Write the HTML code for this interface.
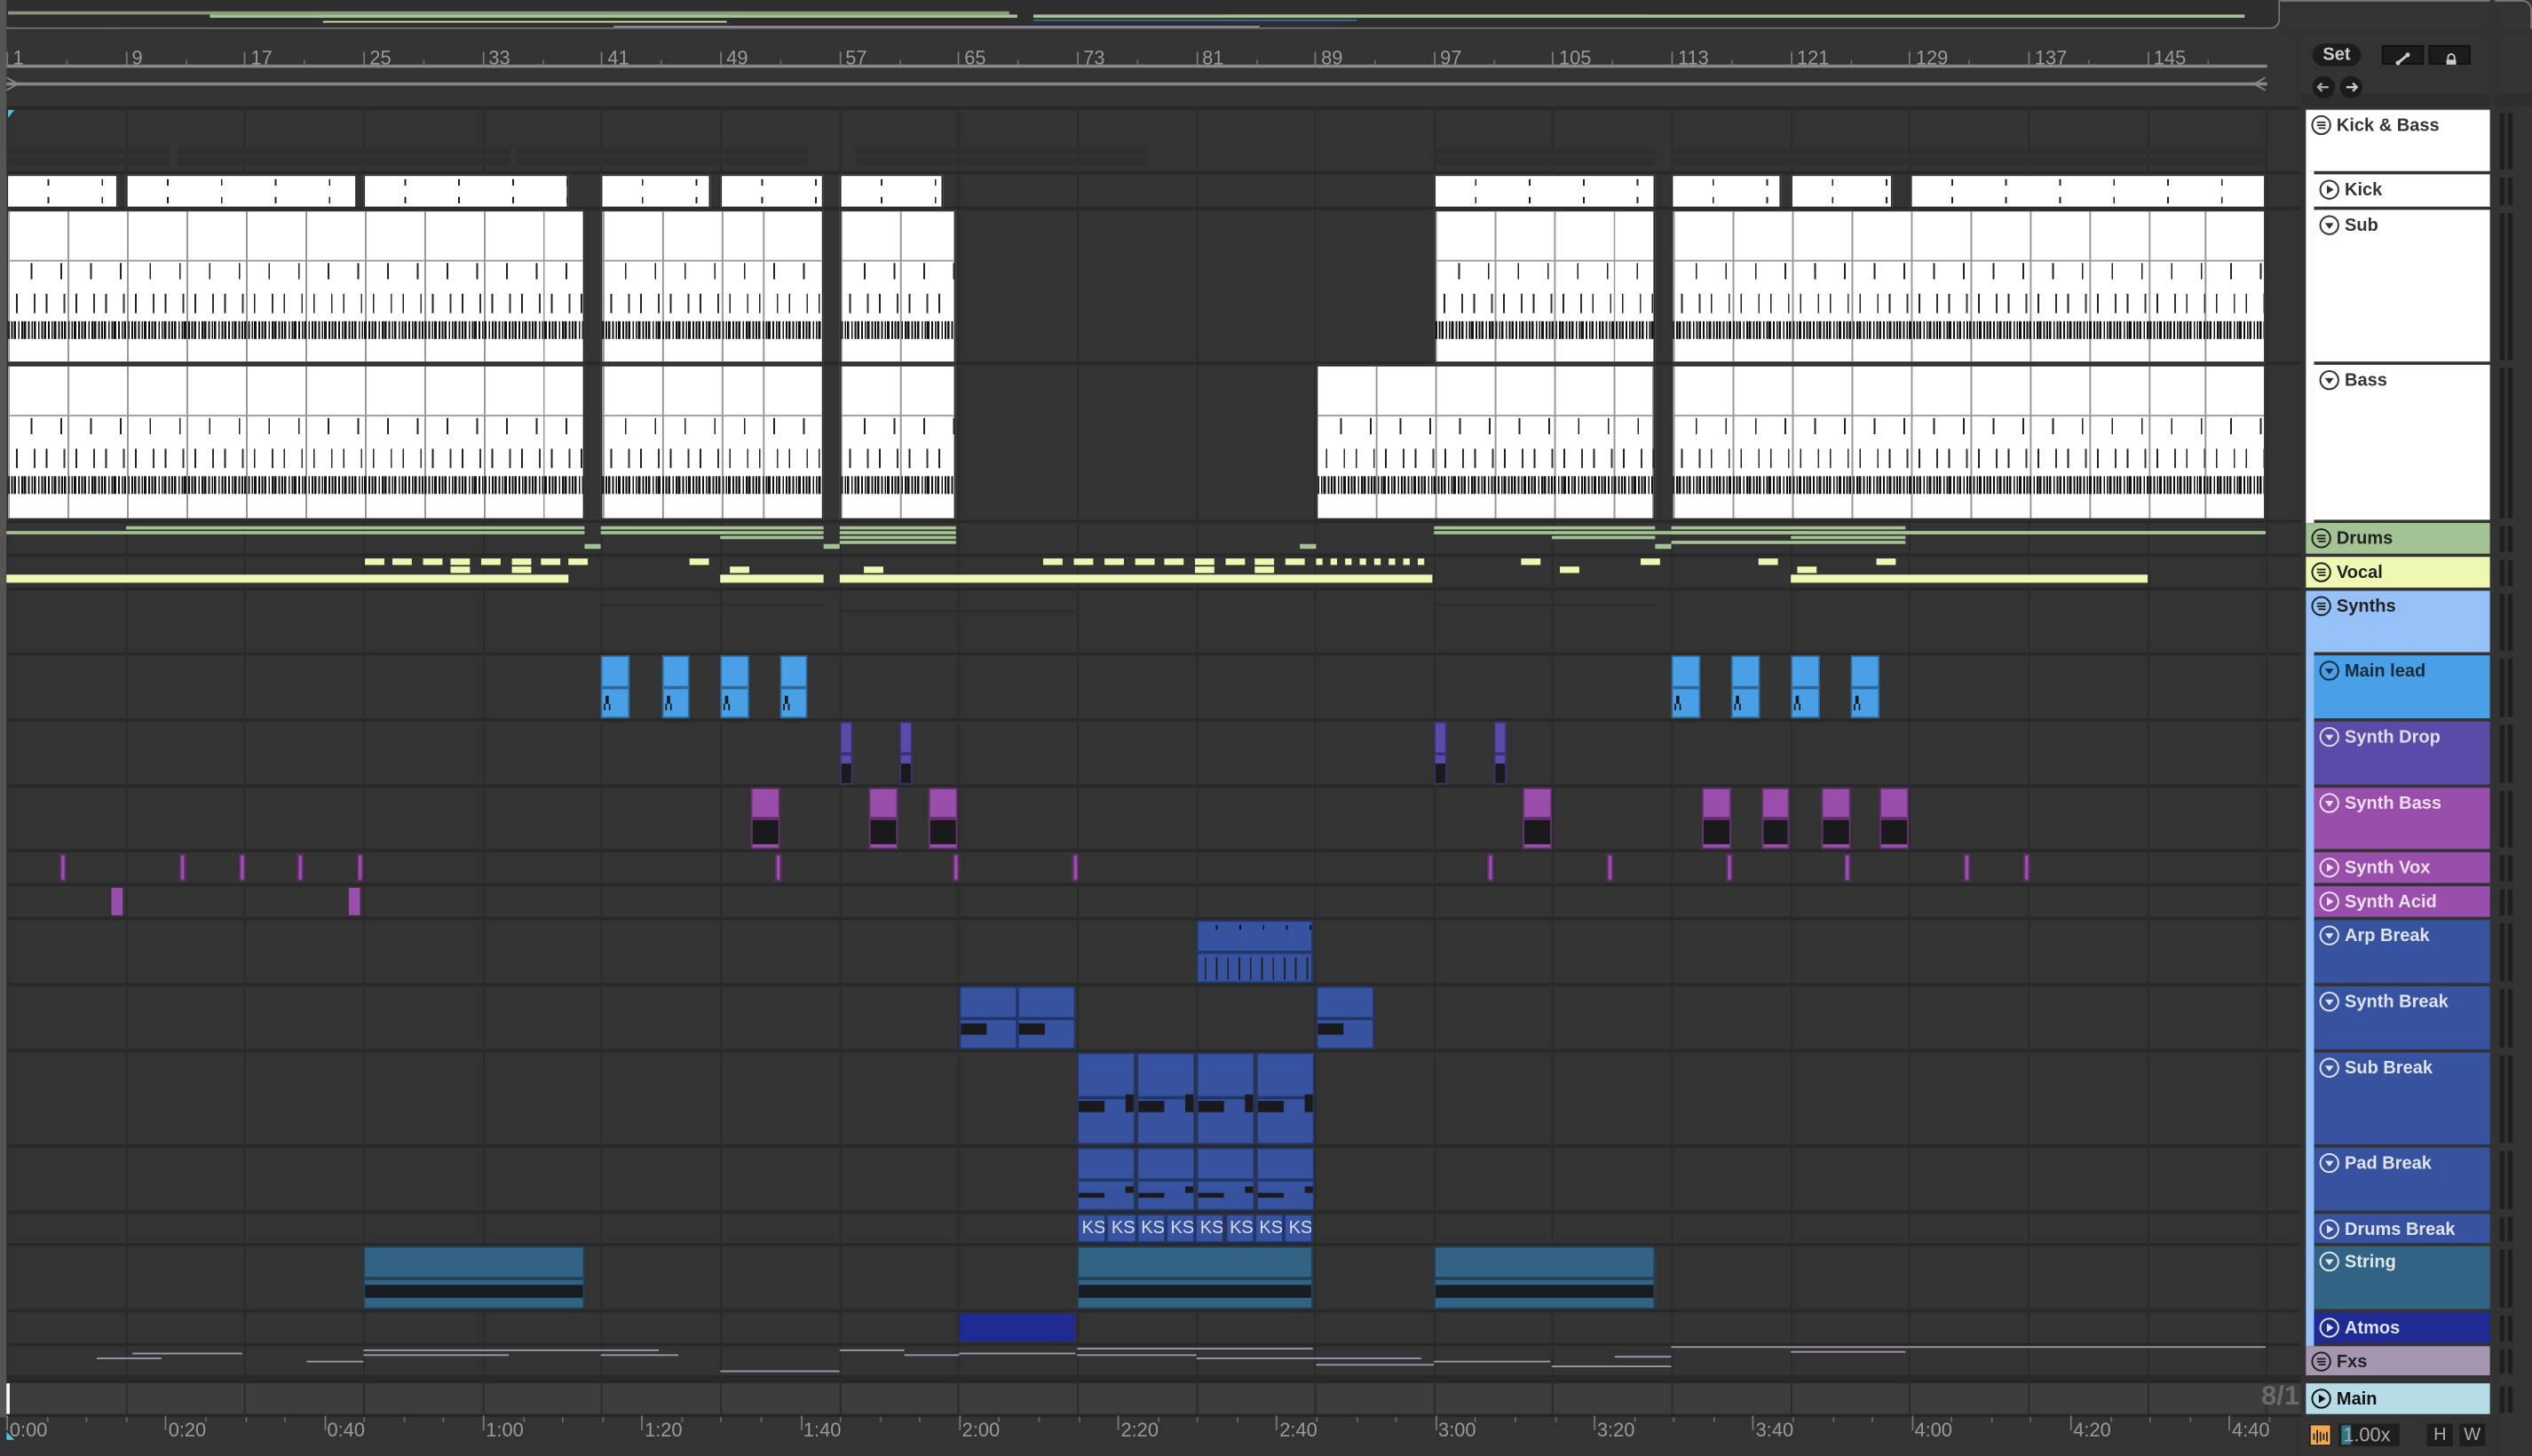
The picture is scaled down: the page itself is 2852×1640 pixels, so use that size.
<!DOCTYPE html>
<html><head><meta charset="utf-8">
<style>
html,body{margin:0;padding:0;background:#2b2b2b;width:2852px;height:1640px;overflow:hidden}
#s{position:absolute;left:0;top:0;width:1568px;height:902px;transform:scale(1.81888,1.81818);transform-origin:0 0;background:#333;font-family:"Liberation Sans",sans-serif;overflow:hidden}
.a{position:absolute;box-sizing:border-box}
</style></head><body>
<div id="s"></div>
<script>
const S=document.getElementById('s');
function d(x,y,w,h,st,html){const e=document.createElement('div');e.className='a';e.style.cssText=`left:${x}px;top:${y}px;width:${w}px;height:${h}px;`+(st||'');if(html)e.innerHTML=html;S.appendChild(e);return e;}
const X=b=>4+(b-1)/8*73.65;
d(0,0,1412,18,'background:#2e2e2e;border:1.5px solid #777;border-radius:0 0 6px 6px;border-top:none');
d(5,7,620,2,'background:#889a7a');d(130,9,500,2,'background:#a3c394');d(640,9,380,2,'background:#a3c394');d(760,9,130,2,'background:#a3c394');d(890,9,500,2,'background:#a3c394');
d(200,13,250,1,'background:#d7e3a0');d(640,12,200,1,'background:#3a6d8e');d(380,16,400,1,'background:#9a8fa8');
d(0,18,1425,48,'background:#333');
d(4,40,1400,1.5,'background:#888');d(4,51,1400,1.5,'background:#888');
d(4,43,8,8,'','<svg width="8" height="8"><path d="M0 0L7 4L0 8" fill="none" stroke="#888"/></svg>');
d(1395,43,8,8,'','<svg width="8" height="8"><path d="M8 0L1 4L8 8" fill="none" stroke="#888"/></svg>');
[1,9,17,25,33,41,49,57,65,73,81,89,97,105,113,121,129,137,145].forEach(b=>{const x=X(b);d(x,32,1,8,'background:#777');d(x+4,29,40,14,'font-size:12px;color:#9a9a9a',''+b);d(x+37,37,1,3,'background:#666');});
d(4,60,5,5,'','<svg width="5" height="5"><path d="M0 0L5 0L1 5Z" fill="#4cc6e0"/></svg>');
const rows=[[68,106],[108,128],[130,224],[226,322],[324,343],[345,364],[366,404],[406,445],[447,486],[488,526],[528,547],[549,568],[570,609],[611,650],[652,709],[711,750],[752,770],[772,811],[813,832],[834,852]];
d(0,66,1425,2,'background:#282828');
rows.forEach(r=>{d(0,r[1],1425,2,'background:#282828');});
d(0,854,1425,3,'background:#282828');
d(0,857,1425,19,'background:#3d3d3d');
d(0,876,1425,2,'background:#262626');
for(let b=1;b<=153;b+=8){const x=X(b);d(x,66,1,810,'background:#2a2a2a');}
d(0,0,4,902,'background:#555');
[[4,105],[110,315],[320,500],[530,710],[888,1025],[1035,1403]].forEach(s=>{d(s[0],92,s[1]-s[0],4,'background:#2e2e2e');d(s[0],98,s[1]-s[0],4,'background:#2e2e2e');});
function wclip(x1,x2,y1,y2,kind){
 const w=x2-x1;const e=d(x1,y1,w,y2-y1,'background:#fff;border:1px solid #2a2a2a;overflow:hidden');
 let h='';
 if(kind==0){h+=`<div class="a" style="left:0;top:2px;width:100%;height:4px;background:repeating-linear-gradient(90deg,transparent 0 ${(X(13)-X(9))/2+6}px,#222 0 ${(X(13)-X(9))/2+7}px,transparent 0 ${(X(13)-X(9))/2+15}px)"></div>`;
  h+=`<div class="a" style="left:0;bottom:2px;width:100%;height:4px;background:repeating-linear-gradient(90deg,transparent 0 ${(X(13)-X(9))/2+6}px,#222 0 ${(X(13)-X(9))/2+7}px,transparent 0 ${(X(13)-X(9))/2+15}px)"></div>`;}
 else{const sp=(X(5)-X(1));
  h+=`<div class="a" style="left:0;top:0;width:100%;height:100%;background:repeating-linear-gradient(90deg,#999 0 1px,transparent 1px ${sp}px);background-position:${-((x1-4)%sp)}px 0"></div>`;
  h+=`<div class="a" style="left:0;top:30px;width:100%;height:1px;background:#999"></div>`;
  h+=`<div class="a" style="left:0;top:32px;width:100%;height:10px;background:repeating-linear-gradient(90deg,transparent 0 14px,#222 14px 15px,transparent 15px 18.4px)"></div>`;
  h+=`<div class="a" style="left:0;top:51px;width:100%;height:12px;background:repeating-linear-gradient(90deg,transparent 0 5px,#222 5px 6px,transparent 6px 16px,#333 16px 17px,transparent 17px 18.4px)"></div>`;
  h+=`<div class="a" style="left:0;top:68px;width:100%;height:11px;background:repeating-linear-gradient(90deg,#111 0 1px,transparent 1px 2px,#111 2px 3px,transparent 3px 3.5px,#111 3.5px 5px,transparent 5px 6.2px)"></div>`;}
 e.innerHTML=h;}
[[4,73],[78,221],[225,352],[372,440],[446,510],[520,584],[888,1025],[1035,1103],[1109,1172],[1183,1403]].forEach(s=>wclip(s[0],s[1],108,129,0));
[[4,362],[372,510],[520,592],[888,1025],[1035,1403]].forEach(s=>wclip(s[0],s[1],130,225,1));
[[4,362],[372,510],[520,592],[815,1025],[1035,1403]].forEach(s=>wclip(s[0],s[1],226,322,1));
const G='#a3c394';
[[78,362,326],[4,362,329],[372,510,326],[372,510,329],[446,510,332],[520,592,326],[520,592,329],[520,592,332],[520,592,335],[888,1025,326],[888,1403,329],[961,1025,332],[1035,1180,326],[1035,1403,329],[1109,1180,332],[1035,1180,335]].forEach(s=>d(s[0],s[2],s[1]-s[0],2,'background:'+G));
[[362,372],[510,520],[805,815],[1025,1035]].forEach(s=>d(s[0],337,s[1]-s[0],3,'background:'+G));
const V='#eef8b2';
[226,243,262,279,298,317,335,352,427,646,665,684,703,721,740,759,777,796,942,1016,1089,1162].forEach((x,i)=>d(x,346,12,4,'background:'+V));
[279,317,452,535,740,777,966,1113].forEach(x=>d(x,351,12,4,'background:'+V));
for(let x=815;x<884;x+=9)d(x,346,4,4,'background:'+V);
[[4,352],[446,510],[520,887],[1109,1330]].forEach(s=>d(s[0],356,s[1]-s[0],5,'background:'+V));
[[372,510,370],[520,666,374],[888,1025,370]].forEach(s=>d(s[0],s[2]+4,s[1]-s[0],1,'background:#2a2a2a'));
function cc(x1,x2,y1,y2,col,notes){const e=d(x1,y1,x2-x1,y2-y1,'background:'+col+';border:1px solid rgba(0,0,0,.35);overflow:hidden');const hh=Math.round((y2-y1)*0.45);let h=`<div class="a" style="left:0;top:${hh}px;width:100%;height:1.5px;background:rgba(0,0,0,.35)"></div>`;(notes||[]).forEach(n=>h+=`<div class="a" style="left:${n[0]}px;top:${n[1]}px;width:${n[2]}px;height:${n[3]}px;background:#1a1a1c"></div>`);e.innerHTML=h;return e;}
[[372,390],[410,427],[446,464],[483,500],[1035,1053],[1072,1090],[1109,1127],[1146,1164]].forEach(s=>cc(s[0],s[1],406,445,'#4aa0e6',[[2,24,2,5],[1,29,1,4],[4,29,1,4],[3,37,2,3]]));
[[520,528],[557,565],[888,896],[925,933]].forEach(s=>cc(s[0],s[1],447,486,'#5b4aa8',[[0,25,8,15]]));
[[465,483],[538,556],[575,593],[943,961],[1054,1072],[1091,1108],[1128,1146],[1164,1182]].forEach(s=>cc(s[0],s[1],488,526,'#9a4eab',[[0,19,18,15]]));
[37,111,148,184,221,480,590,664,921,995,1069,1142,1216,1253].forEach(x=>d(x,529,4,17,'background:#9a4eab;border:1px solid #5a2a66'));
[69,216].forEach(x=>d(x,550,7,17,'background:#9a4eab'));
const B='#3753a0';
const arp=cc(741,813,570,609,B);arp.innerHTML+=`<div class="a" style="left:0;top:2px;width:100%;height:3px;background:repeating-linear-gradient(90deg,transparent 0 11px,#111 11px 12px,transparent 12px 14.5px)"></div><div class="a" style="left:0;top:22px;width:100%;height:14px;background:repeating-linear-gradient(90deg,transparent 0 4px,#222 4px 5px,transparent 5px 7px)"></div>`;
[[594,630],[630,666],[815,851]].forEach(s=>cc(s[0],s[1],611,650,B,[[0,22,16,7]]));
[667,704,741,778].forEach(x=>cc(x,x+36,652,709,B,[[0,29,16,7],[29,25,11,11],[42,50,10,12]]));
[667,704,741,778].forEach(x=>cc(x,x+36,711,750,B,[[0,27,16,3],[29,23,11,4],[42,34,10,4]]));
for(let i=0;i<8;i++){const x=667+i*18.3;d(x,752,18.3,18,'background:'+B+';border:1px solid #223366;color:#d6dcef;font-size:11px;line-height:16px;padding-left:2px;overflow:hidden','KSI');}
[[225,362],[667,813],[888,1025]].forEach(s=>{const e=cc(s[0],s[1],772,811,'#336384');e.innerHTML+=`<div class="a" style="left:0;top:23px;width:100%;height:8px;background:#191d21"></div>`;});
d(594,814,72,17,'background:#1f2a92');
const F='#a596b2';
[[60,100,841],[82,150,838],[190,225,843],[225,408,836],[225,315,839],[372,420,839],[446,520,849],[520,560,836],[560,594,839],[594,666,838],[667,813,835],[667,741,839],[741,880,841],[815,888,845],[888,960,843],[961,1035,846],[1000,1035,840],[1035,1403,834],[1109,1180,837]].forEach(s=>d(s[0],s[2],s[1]-s[0],1,'background:'+F));
d(1380,855,44,22,'font-size:17px;font-weight:bold;color:#6a6a6a;text-align:right','8/1');
d(4,857,2,19,'background:#fff');
d(0,878,1425,24,'background:#333');
['0:00','0:20','0:40','1:00','1:20','1:40','2:00','2:20','2:40','3:00','3:20','3:40','4:00','4:20','4:40'].forEach((t,i)=>{const x=4+i*98.3;d(x,877,1,9,'background:#777');d(x+2,879,40,14,'font-size:12px;color:#9a9a9a',t);for(let k=1;k<4;k++)d(x+k*24.6,878,1,3,'background:#666');});
d(4,879,5,5,'','<svg width="5" height="5"><path d="M0 0L0 5L5 5Z" fill="#4cc6e0"/></svg>');
d(1425,18,143,884,'background:#333');
d(1412,0,156,18,'background:#333;border-top:1.5px solid #777;border-right:1.5px solid #777;border-radius:0 6px 0 0');
d(1425,58,143,8,'background:#2e2e2e');
d(1432,27,30,14,'background:#1c1c1c;border-radius:7px;color:#ccc;font-size:11px;font-weight:bold;text-align:center;line-height:14px','Set');
d(1475,28,26,12,'background:#1c1c1c;border:1px solid #111','<svg width="26" height="11"><path d="M9 8L15 3" stroke="#ccc" stroke-width="1.6"/><circle cx="9" cy="8" r="1.4" fill="#ccc"/><circle cx="15" cy="3" r="1.4" fill="#ccc"/></svg>');
d(1504,28,26,12,'background:#1c1c1c;border:1px solid #111','<svg width="26" height="11"><path d="M10 6h6v3h-6z" fill="#ccc"/><path d="M11 6V4.5a2 2 0 0 1 4 0V6" fill="none" stroke="#ccc"/></svg>');
d(1432,47,14,14,'background:#1c1c1c;border-radius:50%','<svg width="14" height="14"><path d="M10 7H4M6 4.5L3.5 7L6 9.5" stroke="#aaa" stroke-width="1.3" fill="none"/></svg>');
d(1449,47,14,14,'background:#1c1c1c;border-radius:50%','<svg width="14" height="14"><path d="M4 7h6M8 4.5L10.5 7L8 9.5" stroke="#ccc" stroke-width="1.3" fill="none"/></svg>');
const T=[['Kick & Bass',68,106,'#fff','#333','g',0],['Kick',108,128,'#fff','#333','p',1],['Sub',130,224,'#fff','#333','d',1],['Bass',226,322,'#fff','#333','d',1],['Drums',324,343,'#a3c394','#222','g',0],['Vocal',345,364,'#eef8b2','#222','g',0],['Synths',366,404,'#95c1f8','#222','g',0],['Main lead',406,445,'#4aa0e6','#1a2a3a','d',1],['Synth Drop',447,486,'#5b4aa8','#e0dcf0','d',1],['Synth Bass',488,526,'#9a4eab','#f0e0f4','d',1],['Synth Vox',528,547,'#9a4eab','#f0e0f4','p',1],['Synth Acid',549,568,'#9a4eab','#f0e0f4','p',1],['Arp Break',570,609,B,'#dfe4f4','d',1],['Synth Break',611,650,B,'#dfe4f4','d',1],['Sub Break',652,709,B,'#dfe4f4','d',1],['Pad Break',711,750,B,'#dfe4f4','d',1],['Drums Break',752,770,B,'#dfe4f4','p',1],['String',772,811,'#336384','#dfe8ef','d',1],['Atmos',813,832,'#1f2a92','#dfe4f4','p',1],['Fxs',834,852,'#a596b2','#222','g',0],['Main',857,876,'#b6dce6','#111','p',0]];
d(1428,106,5,218,'background:#fff');
d(1428,404,5,430,'background:#95c1f8');
T.forEach(t=>{const x=t[6]?1433:1428;const w=1542-x;d(x,t[1],w,t[2]-t[1],'background:'+t[3]);
 let ic='';const c=t[4];
 if(t[5]=='g')ic=`<svg width="13" height="13"><circle cx="6.5" cy="6.5" r="5.6" fill="none" stroke="${c}" stroke-width="1.1"/><path d="M3.8 4.8h5.4M3.8 6.6h5.4M4.8 8.4h4.4" stroke="${c}" stroke-width="1"/></svg>`;
 else if(t[5]=='p')ic=`<svg width="13" height="13"><circle cx="6.5" cy="6.5" r="5.6" fill="none" stroke="${c}" stroke-width="1.1"/><path d="M5 3.8L9.2 6.5L5 9.2Z" fill="${c}"/></svg>`;
 else ic=`<svg width="13" height="13"><circle cx="6.5" cy="6.5" r="5.6" fill="none" stroke="${c}" stroke-width="1.1"/><path d="M3.8 5.2L9.2 5.2L6.5 8.8Z" fill="${c}"/></svg>`;
 d(x+3,t[1]+3,13,13,'',ic);
 d(x+19,t[1]+3,110,14,`font-size:11px;font-weight:bold;color:${c};line-height:14px`,t[0]);
 d(1548,t[1]+2,3,t[2]-t[1]-3,'background:#1e1e1e');d(1553,t[1]+2,3,t[2]-t[1]-3,'background:#1e1e1e');
});
d(1542,0,3,902,'background:#333');
d(1430,882,14,14,'background:#f0a850;border:1px solid #222','<svg width="12" height="12"><path d="M2 4v4M4 2v8M6 3v6M8 4v4M10 3v6" stroke="#222" stroke-width="1"/></svg>');
d(1448,882,38,14,'background:#1e1e1e;border:1px solid #222');d(1450,883,6,12,'background:#2e7585');
d(1451,881,36,14,'font-size:12px;color:#aaa;line-height:16px','1.00x');
d(1503,882,16,14,'background:#1e1e1e;color:#aaa;font-size:11px;text-align:center;line-height:14px','H');
d(1523,882,16,14,'background:#1e1e1e;color:#aaa;font-size:11px;text-align:center;line-height:14px','W');
</script>
</body></html>
